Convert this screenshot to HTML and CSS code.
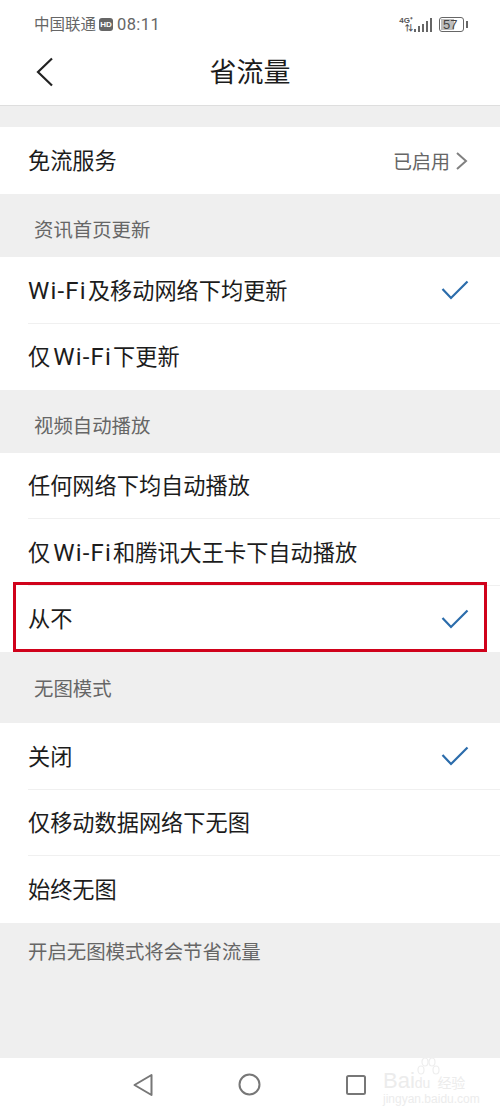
FILE: index.html
```html
<!DOCTYPE html>
<html lang="zh-CN">
<head>
    <meta charset="UTF-8">
    <meta name="viewport" content="width=device-width, initial-scale=1.0">
    <title>省流量</title>
    <link rel="stylesheet" href="styles.css">
</head>
<body>
    <div class="status-bar">
        <div class="status-left">
            <span class="carrier">中国联通</span>
            <span class="hd">HD</span>
            <span class="time">08:11</span>
        </div>
        <div class="status-right">
            <div class="net">
                <span class="net-type">4G⁺</span>
                <span class="net-arrows">⇅</span>
            </div>
            <div class="signal">
                <i class="s1"></i><i class="s2"></i><i class="s3"></i><i class="s4"></i><i class="s5"></i>
            </div>
            <div class="battery"><span class="battery-level">57</span></div>
            <div class="battery-tip"></div>
        </div>
    </div>

    <header class="header">
        <svg class="back" width="20" height="30" viewBox="0 0 20 30">
            <path d="M17 1.5 L3 15 L17 28.5" fill="none" stroke="#222" stroke-width="2.2"/>
        </svg>
        <h1>省流量</h1>
    </header>

    <div class="gap"></div>
    <div class="row first">
        <span>免流服务</span>
        <span class="row-value">已启用
            <svg width="13" height="20" viewBox="0 0 13 20"><path d="M2 2 L11 10 L2 18" fill="none" stroke="#808080" stroke-width="2"/></svg>
        </span>
    </div>

    <div class="section-title t1">资讯首页更新</div>
    <div class="row line">
        <span><span class="latin first-word">Wi-Fi</span>及移动网络下均更新</span>
        <svg class="check" width="28" height="20" viewBox="0 0 28 20"><path d="M1.5 9 L10 18 L26.5 1.5" fill="none" stroke="#2b6cab" stroke-width="2.2"/></svg>
    </div>
    <div class="row">
        <span>仅<span class="latin">Wi-Fi</span>下更新</span>
    </div>

    <div class="section-title t2">视频自动播放</div>
    <div class="row line">
        <span>任何网络下均自动播放</span>
    </div>
    <div class="row line">
        <span>仅<span class="latin">Wi-Fi</span>和腾讯大王卡下自动播放</span>
    </div>
    <div class="row marked">
        <span>从不</span>
        <svg class="check" width="28" height="20" viewBox="0 0 28 20"><path d="M1.5 9 L10 18 L26.5 1.5" fill="none" stroke="#2b6cab" stroke-width="2.2"/></svg>
        <div class="red-box"></div>
    </div>

    <div class="section-title t3">无图模式</div>
    <div class="row line">
        <span>关闭</span>
        <svg class="check" width="28" height="20" viewBox="0 0 28 20"><path d="M1.5 9 L10 18 L26.5 1.5" fill="none" stroke="#2b6cab" stroke-width="2.2"/></svg>
    </div>
    <div class="row line">
        <span>仅移动数据网络下无图</span>
    </div>
    <div class="row">
        <span>始终无图</span>
    </div>

    <div class="footer-note">开启无图模式将会节省流量</div>

    <nav class="nav-bar">
        <svg width="20" height="24" viewBox="0 0 20 24"><path d="M1.5 12 L18.5 2 V22 Z" fill="none" stroke="#777" stroke-width="2" stroke-linejoin="round"/></svg>
        <svg width="23" height="23" viewBox="0 0 23 23"><circle cx="11.5" cy="11.5" r="10" fill="none" stroke="#777" stroke-width="2"/></svg>
        <svg width="20" height="20" viewBox="0 0 20 20"><rect x="1" y="1" width="18" height="18" rx="1.5" fill="none" stroke="#777" stroke-width="2"/></svg>
    </nav>

    <div class="watermark">
        <svg class="paw" width="24" height="24" viewBox="0 0 24 24">
            <g fill="none" stroke="#eeeeee" stroke-width="1.2">
                <ellipse cx="5" cy="14" rx="3" ry="4"/>
                <ellipse cx="9" cy="6" rx="3" ry="4"/>
                <ellipse cx="16" cy="6" rx="3" ry="4"/>
                <ellipse cx="20" cy="14" rx="3" ry="4"/>
            </g>
        </svg>
        <div class="wm-main">Bai<b>du</b><span>经验</span></div>
        <div class="wm-sub">jingyan.baidu.com</div>
    </div>
</body>
</html>
```

FILE: styles.css
```css
* {
    box-sizing: border-box;
}
body {
    margin: 0;
    width: 500px;
    height: 1111px;
    position: relative;
    overflow: hidden;
    display: flex;
    flex-direction: column;
    background: #efefef;
    font-family: "Noto Sans CJK SC", "Liberation Sans", sans-serif;
    color: #1c1c1c;
}
.status-bar {
    height: 46px;
    flex: none;
    background: #fff;
    display: flex;
    justify-content: space-between;
    align-items: center;
    padding: 3px 32px 0 34px;
    color: #666;
}
.status-left {
    display: flex;
    align-items: center;
    font-size: 15.5px;
}
.carrier {
    margin-bottom: 3px;
}
.hd {
    margin: 0 4px 0 3px;
    width: 14px;
    height: 13px;
    border-radius: 3px;
    background: #666;
    color: #fff;
    font: bold 8px/13px "Liberation Sans", sans-serif;
    text-align: center;
}
.time {
    font: 16.5px "Roboto", sans-serif;
    letter-spacing: 0.4px;
}
.status-right {
    display: flex;
    align-items: center;
    color: #555;
}
.net {
    display: flex;
    flex-direction: column;
    align-items: flex-end;
    font: bold 8px/8px "Liberation Sans", sans-serif;
}
.signal {
    display: flex;
    align-items: flex-end;
    gap: 2px;
    height: 14px;
    margin: 0 7px 0 1px;
}
.signal i {
    width: 2px;
    background: #666;
}
.s1 { height: 3px; }
.s2 { height: 6px; }
.s3 { height: 8px; }
.s4 { height: 11px; }
.s5 { height: 14px; }
.battery {
    width: 25px;
    height: 15px;
    border: 1.5px solid #666;
    border-radius: 3px;
    padding: 1px;
    display: flex;
}
.battery-level {
    width: 60%;
    background: #bdbdbd;
    font: 13px/11px "Liberation Sans", sans-serif;
    color: #444;
    white-space: nowrap;
    padding-left: 2px;
}
.battery-tip {
    width: 2px;
    height: 7px;
    margin-left: 2px;
    background: #666;
}
.header {
    height: 60px;
    flex: none;
    background: #fff;
    border-bottom: 1px solid #dedede;
    position: relative;
    display: flex;
    justify-content: center;
    align-items: center;
}
.header h1 {
    margin: 0 0 10px;
    font-size: 27px;
    font-weight: 400;
    line-height: 36px;
}
.back {
    position: absolute;
    left: 35px;
    top: 11px;
}
.gap {
    height: 21px;
    flex: none;
}
.row {
    height: 66.5px;
    flex: none;
    background: #fff;
    display: flex;
    justify-content: space-between;
    align-items: center;
    padding: 0 31px 0 28px;
    font-size: 22.2px;
    position: relative;
}
.row > span:first-child {
    margin-bottom: 3px;
}
.row.first {
    height: 67px;
    padding-right: 32px;
}
.latin {
    font-family: "Roboto", sans-serif;
    font-size: 24px;
    letter-spacing: 1.2px;
    padding: 0 1px 0 3px;
}
.latin.first-word {
    padding-left: 0;
}
.line::after {
    content: "";
    position: absolute;
    left: 28px;
    right: 0;
    bottom: 0;
    height: 1px;
    background: #f0f0f0;
}
.row-value {
    display: flex;
    align-items: center;
    gap: 5px;
    font-size: 19px;
    color: #666;
}
.section-title {
    flex: none;
    display: flex;
    align-items: center;
    padding-left: 34px;
    font-size: 19.4px;
    color: #666;
}
.t1 {
    height: 63px;
    padding-top: 6px;
}
.t2 {
    height: 62.5px;
    padding-top: 6px;
}
.t3 {
    height: 71px;
}
.red-box {
    position: absolute;
    left: 13px;
    right: 13px;
    top: -4px;
    bottom: 0;
    border: 3px solid #d0021b;
}
.footer-note {
    flex: 1;
    padding: 14px 28px 0;
    font-size: 19.4px;
    line-height: 27px;
    color: #666;
}
.nav-bar {
    height: 53px;
    flex: none;
    background: #fff;
    display: flex;
    align-items: center;
    padding: 0 134px 0 133px;
    justify-content: space-between;
}
.watermark {
    position: absolute;
    left: 383px;
    top: 1071px;
    color: #ececec;
    font-family: "Liberation Sans", sans-serif;
}
.paw {
    position: absolute;
    left: 33px;
    top: -15px;
}
.wm-main {
    font-size: 22px;
    line-height: 19px;
    white-space: nowrap;
}
.wm-main b {
    font-size: 14px;
    font-weight: 400;
}
.wm-main span {
    font-family: "Noto Sans CJK SC", sans-serif;
    font-size: 14px;
    margin-left: 7px;
}
.wm-sub {
    font-size: 12px;
    line-height: 13px;
}
```
